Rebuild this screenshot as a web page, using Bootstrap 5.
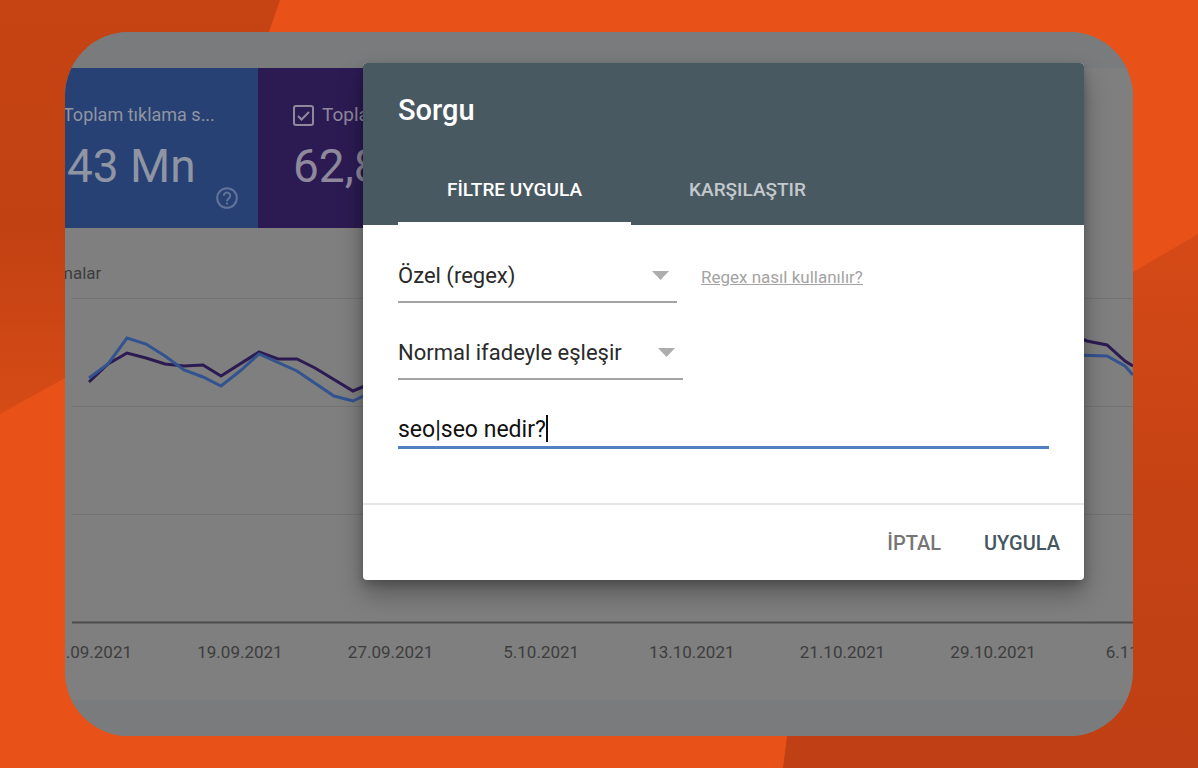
<!DOCTYPE html>
<html lang="tr">
<head>
<meta charset="utf-8">
<meta name="viewport" content="width=device-width, initial-scale=1">
<title>Sorgu</title>
<link rel="stylesheet" href="https://cdn.jsdelivr.net/npm/bootstrap@5.3.0/dist/css/bootstrap.min.css">
<style>
  body { font-family: Roboto, "Liberation Sans", sans-serif; background: #e85117; }
  .stage { padding: 32px 65px; }
  .backdrop { z-index: -1; }
  .frame { border-radius: 64px; background: #7f7f7f; display: grid; }
  .frame > * { grid-area: 1 / 1; min-width: 0; }
  .band { height: 36px; background: #797b7c; }
  .tile { height: 160px; color: #8f95a2; padding-top: 35px; }
  .tile-clicks { width: 193px; background: #284174; }
  .tile-views { width: 193px; background: #2c1b53; color: #8f899d; padding-left: 35px; }
  .tile-label { font-size: 19px; line-height: 24px; white-space: nowrap; }
  .tile-value { font-size: 46px; line-height: 56px; margin-top: 11px; white-space: nowrap; }
  .tile-clicks .tile-label { margin-left: -2px; font-size: 18px; }
  .tile-clicks .tile-value { padding-left: 2px; }
  .tick { appearance: none; width: 21px; height: 21px; margin: 0; border: 2px solid #8f899d; border-radius: 3px;
    background: url("data:image/svg+xml,%3Csvg xmlns='http://www.w3.org/2000/svg' viewBox='0 0 17 17'%3E%3Cpath d='M3 9l3.500 3.500L14 5' fill='none' stroke='%238f899d' stroke-width='2'/%3E%3C/svg%3E") center / 100% no-repeat; }
  .help { right: 20px; bottom: 19px; line-height: 0; }
  .chart-title { font-size: 17px; line-height: 24px; color: #3d3d3d; margin: 33px 0 0 -7px; }
  .chart { height: 345px; width: 100%; }
  .dates { margin: 10px -86px 0 -51px; font-size: 17px; line-height: 24px; color: #3d3d3d; padding-bottom: 36px; }
  .dates span { flex: 1 1 0; }
  .dialog { margin: 31px 49px auto 298px; border-radius: 4px; background: #fff; z-index: 1;
    box-shadow: 0 14px 26px rgba(0,0,0,.3), 0 4px 10px rgba(0,0,0,.2); }
  .dialog-top { background: #495962; padding: 29px 35px 0; border-radius: 4px 4px 0 0; }
  .dialog-title { font-size: 29px; line-height: 36px; font-weight: 500; }
  .tabs { margin-top: 29px; }
  .tab { width: 233px; height: 68px; font-size: 19px; line-height: 28px; font-weight: 500; color: #c3c9cd;
    background: none; border: 0; border-bottom: 3px solid transparent; padding: 0; }
  .tab.active { color: #fff; border-color: #fff; }
  .dialog-main { padding: 25px 35px 54px; }
  .pick { appearance: none; height: 53px; border: 0; border-bottom: 2px solid #a3a3a3; border-radius: 0; padding: 0 40px 0 0;
    font-size: 22px; line-height: 30px; color: #2a2a2a;
    background: url("data:image/svg+xml,%3Csvg xmlns='http://www.w3.org/2000/svg' viewBox='0 0 17 9'%3E%3Cpath d='M0 0h17l-8.500 9z' fill='%23adadad'/%3E%3C/svg%3E") right 8px center / 17px 9px no-repeat; }
  .pick-kind { width: 279px; }
  .pick-rule { width: 285px; margin-top: 24px; }
  .guide { font-size: 17px; line-height: 24px; color: #a3a3a3; margin-left: 24px; }
  .query { height: 38px; margin-top: 31px; border: 0; border-bottom: 3px solid #527ec2; border-radius: 0; padding: 2px 0 0;
    font-size: 23px; color: #111; outline: 0; }
  .caret { left: 148px; top: 4px; width: 2px; height: 27px; background: #111; }
  .dialog-foot { border-top: 2px solid #e6e6e6; padding: 21px 24px 20px; gap: 43px; }
  .act { border: 0; background: none; padding: 0; font-size: 20px; line-height: 34px; font-weight: 500; color: #757575; }
  .act-main { color: #455660; }
</style>
</head>
<body>
<div class="stage position-relative min-vh-100">
  <svg class="backdrop position-absolute top-0 start-0 w-100 h-100" viewBox="0 0 1198 768" preserveAspectRatio="none" aria-hidden="true">
    <defs>
      <linearGradient id="gl" x1="0" y1="0" x2="0" y2="1"><stop offset="0" stop-color="#c64413"/><stop offset=".55" stop-color="#c24113"/><stop offset="1" stop-color="#d64b16"/></linearGradient>
      <linearGradient id="gr" x1="0" y1="0" x2="0" y2="1"><stop offset="0" stop-color="#d54a17"/><stop offset=".5" stop-color="#c54214"/><stop offset="1" stop-color="#bf4014"/></linearGradient>
    </defs>
    <path d="M0 0H280L269 32L65 378L0 414Z" fill="url(#gl)"/>
    <path d="M1198 234L1133 272L787 736L783 768H1198Z" fill="url(#gr)"/>
  </svg>

  <main class="frame position-relative overflow-hidden">
    <section class="report" aria-label="Performans">
      <div class="band"></div>
      <div class="d-flex">
        <div class="tile tile-clicks position-relative">
          <div class="tile-label">Toplam tıklama s...</div>
          <div class="tile-value">43 Mn</div>
          <span class="help position-absolute">
            <svg width="22" height="22" viewBox="0 0 22 22" fill="none" stroke="#62739a" stroke-width="2" role="img" aria-label="Yardım"><circle cx="11" cy="11" r="9.800"/><path d="M7.800 8.800a3.200 3.200 0 1 1 5.200 2.400c-1.200 1-2 1.400-2 3M11 15.500v2"/></svg>
          </span>
        </div>
        <div class="tile tile-views">
          <div class="tile-label d-flex align-items-center">
            <input class="tick me-2" type="checkbox" id="views" checked>
            <label for="views">Toplam</label>
          </div>
          <div class="tile-value">62,8</div>
        </div>
      </div>
      <div class="chart-title">malar</div>
      <svg class="chart d-block" viewBox="0 0 1068 345" preserveAspectRatio="none" fill="none" role="img" aria-label="Grafik">
        <path d="M7 13.500H1068M7 121.500H1068M7 229.500H1068" stroke="#737373" stroke-width="1"/>
        <path d="M7 337.500H1068" stroke="#4c4c4c" stroke-width="2"/>
        <path d="M24 97L43 79L62 68L81 73L100 79L119 81L138 80L156 91L194 67L213 74L232 74L250 83L288 106L307 98M1010 51L1022 56L1042 60L1060 76L1068 81" stroke="#2c1b53" stroke-width="3"/>
        <path d="M24 93L43 79L62 53L81 59L100 71L119 85L138 92L156 101L175 86L194 69L232 86L269 111L288 116L307 107M1010 70L1042 71L1060 81L1068 90" stroke="#33538f" stroke-width="3"/>
      </svg>
      <div class="dates d-flex text-center">
        <span>11.09.2021</span><span>19.09.2021</span><span>27.09.2021</span><span>5.10.2021</span><span>13.10.2021</span><span>21.10.2021</span><span>29.10.2021</span><span>6.11.2021</span>
      </div>
      <div class="band"></div>
    </section>

    <form class="dialog" role="dialog" aria-labelledby="title">
      <header class="dialog-top">
        <h1 class="dialog-title text-white mb-0" id="title">Sorgu</h1>
        <div class="tabs d-flex" role="tablist">
          <button class="tab active" type="button" role="tab" aria-selected="true">FİLTRE UYGULA</button>
          <button class="tab" type="button" role="tab" aria-selected="false">KARŞILAŞTIR</button>
        </div>
      </header>
      <div class="dialog-main">
        <div class="d-flex align-items-center">
          <select class="pick pick-kind" aria-label="Filtre türü"><option>Özel (regex)</option></select>
          <a class="guide" href="#">Regex nasıl kullanılır?</a>
        </div>
        <select class="pick pick-rule d-block" aria-label="Eşleşme"><option>Normal ifadeyle eşleşir</option></select>
        <div class="query-row position-relative">
          <input class="query d-block w-100" type="text" value="seo|seo nedir?" aria-label="Normal ifade">
          <span class="caret position-absolute mt-0"></span>
        </div>
      </div>
      <footer class="dialog-foot d-flex justify-content-end">
        <button class="act" type="button">İPTAL</button>
        <button class="act act-main" type="button">UYGULA</button>
      </footer>
    </form>
  </main>
</div>
<script src="https://cdn.jsdelivr.net/npm/bootstrap@5.3.0/dist/js/bootstrap.bundle.min.js"></script>
</body>
</html>
